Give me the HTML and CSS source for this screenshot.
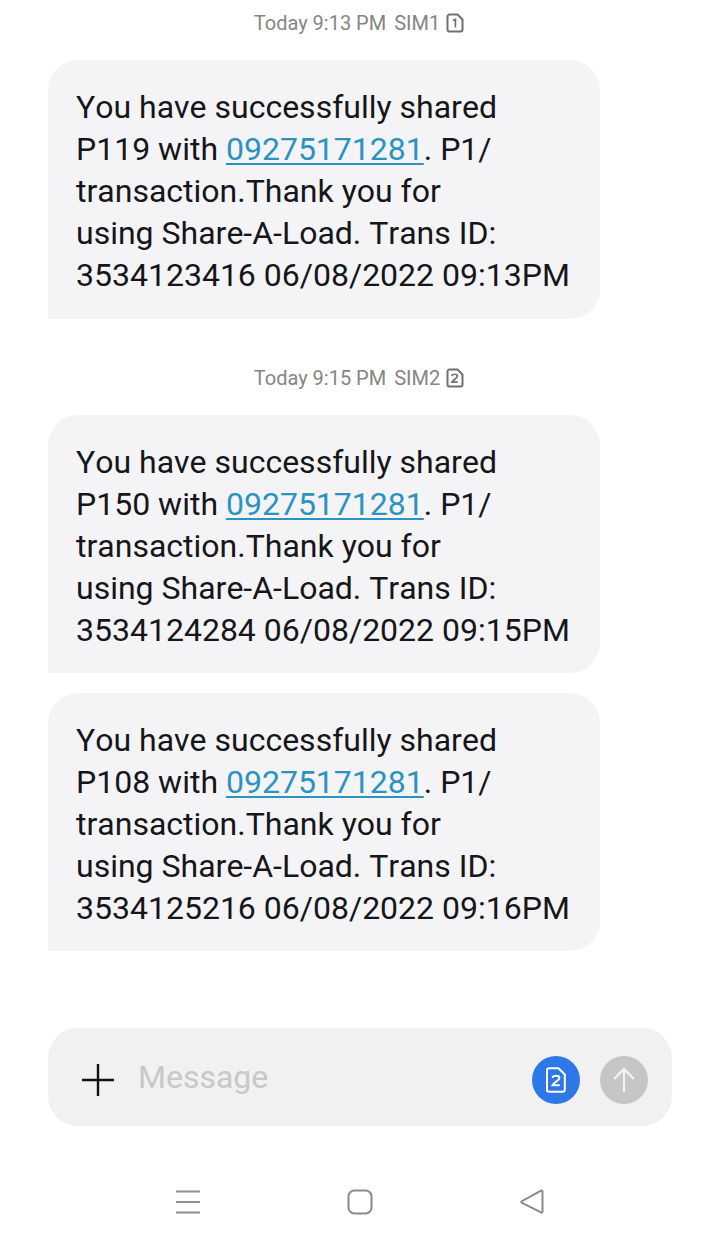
FILE: index.html
```html
<!DOCTYPE html>
<html lang="en">
<head>
    <meta charset="UTF-8">
    <meta name="viewport" content="width=device-width, initial-scale=1.0">
    <title>Messages</title>
    <link rel="stylesheet" href="styles.css">
</head>
<body>
    <div class="thread">
        <div class="stamp stamp-first">
            <span>Today 9:13 PM</span>
            <span>SIM1</span>
            <svg class="sim" width="18" height="20" viewBox="0 0 18 20"><path d="M3.5 1.5h8l5 5v10a2 2 0 0 1-2 2h-11a2 2 0 0 1-2-2v-13a2 2 0 0 1 2-2z" fill="none" stroke="#707070" stroke-width="2"/><path d="M7 7.500l2.400-1.200v8.200" fill="none" stroke="#707070" stroke-width="1.700"/></svg>
        </div>
        <div class="bubble bubble-first">You have successfully shared<br>P119 with <a class="num">09275171281</a>. P1/<br>transaction.Thank you for<br>using Share-A-Load. Trans ID:<br>3534123416 06/08/2022 09:13PM</div>

        <div class="stamp stamp-next">
            <span>Today 9:15 PM</span>
            <span>SIM2</span>
            <svg class="sim" width="18" height="20" viewBox="0 0 18 20"><path d="M3.5 1.5h8l5 5v10a2 2 0 0 1-2 2h-11a2 2 0 0 1-2-2v-13a2 2 0 0 1 2-2z" fill="none" stroke="#707070" stroke-width="2"/><path d="M5.800 8.200c.3-2.600 5.600-2.600 5.600 0 0 2-4 3.200-5.400 6h5.800" fill="none" stroke="#707070" stroke-width="1.700"/></svg>
        </div>
        <div class="bubble">You have successfully shared<br>P150 with <a class="num">09275171281</a>. P1/<br>transaction.Thank you for<br>using Share-A-Load. Trans ID:<br>3534124284 06/08/2022 09:15PM</div>
        <div class="bubble bubble-next">You have successfully shared<br>P108 with <a class="num">09275171281</a>. P1/<br>transaction.Thank you for<br>using Share-A-Load. Trans ID:<br>3534125216 06/08/2022 09:16PM</div>
    </div>

    <div class="composer">
        <svg class="plus" width="34" height="34" viewBox="0 0 34 34"><path d="M1 17h32M17 1v32" stroke="#111" stroke-width="2.400" fill="none"/></svg>
        <span class="placeholder">Message</span>
        <div class="round round-sim">
            <svg width="20" height="26" viewBox="0 0 20 26"><path d="M3 1.200h9.500l6.300 6.300v15.300a2 2 0 0 1-2 2H3a2 2 0 0 1-2-2V3.200a2 2 0 0 1 2-2z" fill="none" stroke="#fff" stroke-width="2"/><path d="M6.600 11c.3-3 6.800-3 6.800 0 0 2.400-5 3.800-6.800 7.300h7.200" fill="none" stroke="#fff" stroke-width="2"/></svg>
        </div>
        <div class="round round-send">
            <svg width="24" height="26" viewBox="0 0 24 26"><path d="M12 25V2M2 12 12 2l10 10" fill="none" stroke="#f4f4f4" stroke-width="2.200"/></svg>
        </div>
    </div>

    <div class="navbar">
        <svg width="26" height="24" viewBox="0 0 26 24"><path d="M1 1.500h24M1 12h24M1 22.500h24" stroke="#8f8f8f" stroke-width="2" fill="none"/></svg>
        <svg width="26" height="26" viewBox="0 0 26 26"><rect x="1.500" y="1.500" width="23" height="23" rx="6" fill="none" stroke="#8a8a8a" stroke-width="2"/></svg>
        <svg width="26" height="26" viewBox="0 0 26 26"><path d="M23.500 2.500v20q0 1.500-1.500.8L3 13.800q-1.500-.8 0-1.600L22 1.700q1.500-.7 1.500.8z" fill="none" stroke="#8a8a8a" stroke-width="2"/></svg>
    </div>
</body>
</html>
```

FILE: styles.css
```css
html, body {
    margin: 0;
    padding: 0;
}
body {
    width: 720px;
    height: 1246px;
    overflow: hidden;
    background: #fff;
    font-family: Roboto, "Liberation Sans", sans-serif;
}
.thread {
    padding: 0 48px;
}
.stamp {
    display: flex;
    justify-content: center;
    align-items: center;
    gap: 8px;
    height: 22px;
    font-size: 20px;
    color: #858585;
    padding-left: 70px;
    width: 552px;
    box-sizing: border-box;
}
.stamp-first {
    margin-top: 12px;
    margin-bottom: 26px;
}
.stamp-next {
    margin-top: 48px;
    margin-bottom: 26px;
}
.sim {
    margin: -1px 0 0 -2px;
}
.bubble {
    width: 552px;
    box-sizing: border-box;
    height: 258px;
    padding: 26px 0 0 28px;
    background: #f4f4f7;
    border-radius: 30px 30px 30px 0;
    font-size: 32px;
    font-kerning: none;
    line-height: 42px;
    color: #16161a;
    white-space: nowrap;
}
.bubble-first {
    height: 259px;
}
.bubble-next {
    margin-top: 20px;
}
.num {
    color: #2b93bd;
    text-decoration: underline;
    text-decoration-thickness: 2px;
    text-underline-offset: 3px;
}
.composer {
    display: flex;
    align-items: center;
    width: 624px;
    height: 98px;
    margin: 77px 0 0 48px;
    padding: 0 24px 0 33px;
    box-sizing: border-box;
    background: #f1f1f2;
    border-radius: 30px;
}
.plus {
    margin-top: 6px;
}
.placeholder {
    margin-left: 23px;
    flex: 1;
    font-size: 32px;
    color: #c8c8c8;
}
.round {
    display: flex;
    align-items: center;
    justify-content: center;
    width: 48px;
    height: 48px;
    border-radius: 50%;
    margin-top: 6px;
}
.round-sim {
    background: #2e77e6;
    margin-right: 20px;
}
.round-send {
    background: #c6c6c6;
}
.navbar {
    display: flex;
    justify-content: space-between;
    align-items: center;
    width: 370px;
    margin: 63px 0 0 175px;
    height: 26px;
}
```
